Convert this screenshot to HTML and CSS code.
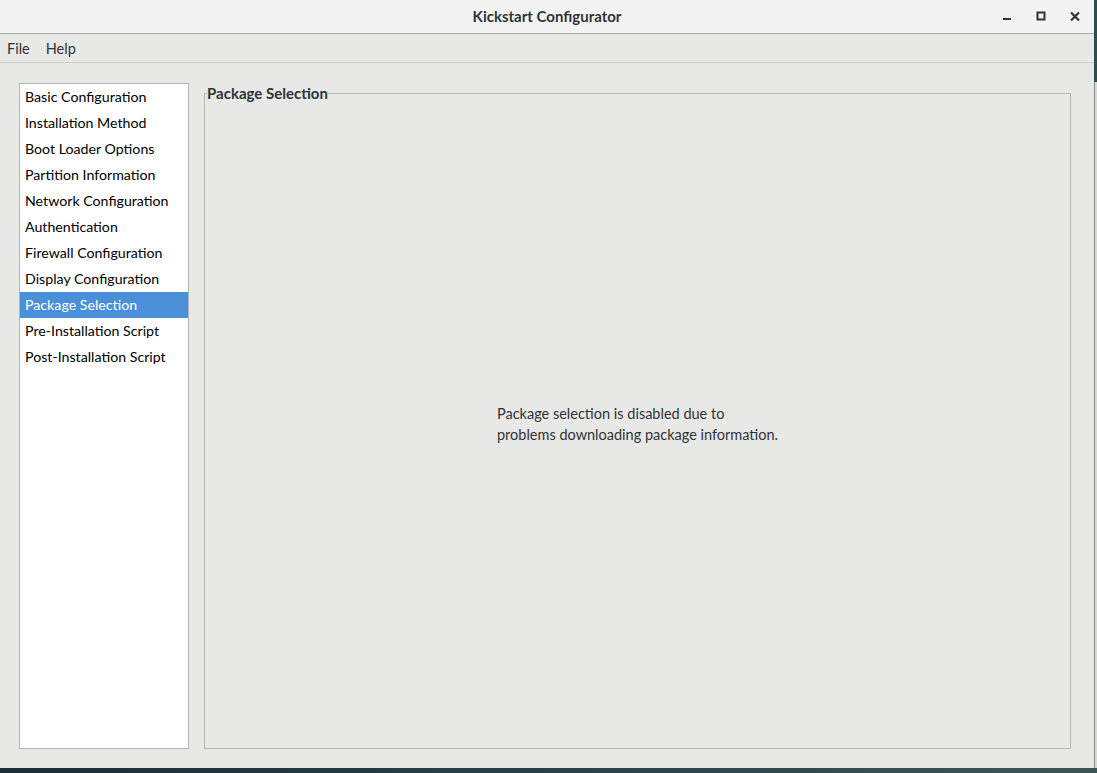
FILE: index.html
```html
<!DOCTYPE html>
<html>
<head>
<meta charset="utf-8">
<title>Kickstart Configurator</title>
<link rel="stylesheet" href="styles.css">
</head>
<body>
<div class="screen">
  <div class="window">
    <header class="titlebar">
      <div class="title">Kickstart Configurator</div>
      <div class="controls">
        <svg class="ctl" width="12" height="12" viewBox="0 0 12 12"><rect x="2" y="7" width="8" height="2" fill="#2e3436"/></svg>
        <svg class="ctl" width="12" height="12" viewBox="0 0 12 12"><rect x="2.5" y="1.5" width="7" height="7" fill="none" stroke="#2e3436" stroke-width="2"/></svg>
        <svg class="ctl" width="12" height="12" viewBox="0 0 12 12"><path d="M2 1.5 L10 9.5 M10 1.5 L2 9.5" stroke="#2e3436" stroke-width="2.2"/></svg>
      </div>
    </header>
    <nav class="menubar">
      <span class="menu-item">File</span>
      <span class="menu-item">Help</span>
    </nav>
    <main class="content">
      <ul class="sidebar">
        <li class="item">Basic Configuration</li>
        <li class="item">Installation Method</li>
        <li class="item">Boot Loader Options</li>
        <li class="item">Partition Information</li>
        <li class="item">Network Configuration</li>
        <li class="item">Authentication</li>
        <li class="item">Firewall Configuration</li>
        <li class="item">Display Configuration</li>
        <li class="item selected">Package Selection</li>
        <li class="item">Pre-Installation Script</li>
        <li class="item">Post-Installation Script</li>
      </ul>
      <fieldset class="frame">
        <legend class="frame-label">Package Selection</legend>
        <div class="frame-body">
          <p class="message">Package selection is disabled due to<br>problems downloading package information.</p>
        </div>
      </fieldset>
    </main>
  </div>
  <div class="edge">
    <div class="edge-top"></div>
    <div class="edge-rest"></div>
  </div>
</div>
</body>
</html>
```

FILE: styles.css
```css
html, body {
  margin: 0;
  padding: 0;
}
body {
  width: 1097px;
  height: 773px;
  overflow: hidden;
  background: linear-gradient(90deg, #1c2c36 0%, #2a4048 50%, #3c5656 100%);
  font-family: "Lato", "Noto Sans", sans-serif;
  color: #2e3436;
}
.screen {
  display: flex;
  height: 768px;
}
.window {
  width: 1094px;
  height: 768px;
  display: flex;
  flex-direction: column;
  background: #e8e8e7;
}
.titlebar {
  height: 33px;
  border-bottom: 1px solid #a8a8a6;
  background: #f3f3f3;
  display: flex;
  align-items: center;
  justify-content: center;
  position: relative;
  flex: none;
}
.title {
  font-weight: bold;
  font-size: 15px;
  color: #2e3436;
  margin-top: -1px;
}
.controls {
  position: absolute;
  right: 13px;
  top: 11px;
  display: flex;
  gap: 22px;
}
.ctl {
  display: block;
}
.menubar {
  height: 28px;
  border-bottom: 1px solid #cfcfcd;
  display: flex;
  align-items: center;
  padding-left: 7px;
  gap: 16px;
  font-size: 14.5px;
  flex: none;
}
.content {
  flex: 1;
  display: flex;
  padding: 20px 23px 19px 19px;
  gap: 15px;
  min-height: 0;
}
.sidebar {
  list-style: none;
  margin: 0;
  padding: 0;
  width: 168px;
  background: #ffffff;
  border: 1px solid #b6b6b3;
  flex: none;
}
.item {
  height: 26px;
  line-height: 26px;
  padding-left: 5px;
  font-size: 14.2px;
  color: #000;
  white-space: nowrap;
}
.item.selected {
  background: #4a90d9;
  color: #ffffff;
}
.frame {
  flex: 1;
  margin: 0;
  padding: 0;
  border: 1px solid #b6b6b3;
  min-width: 0;
  display: flex;
}
.frame-label {
  font-weight: bold;
  font-size: 15px;
  padding: 0;
  margin-left: 2px;
  line-height: 20px;
  color: #2e3436;
}
.frame-body {
  flex: 1;
  height: 100%;
  display: flex;
  align-items: center;
  justify-content: center;
}
.message {
  margin: -3px 0 0 0;
  font-size: 14.5px;
  line-height: 21px;
  color: #2e3436;
}
.edge {
  width: 3px;
  display: flex;
  flex-direction: column;
}
.edge-top {
  height: 82px;
  background: #2f4c50;
}
.edge-rest {
  flex: 1;
  background: #d8d8d6;
  border-left: 1px solid #8a8a88;
}
```
